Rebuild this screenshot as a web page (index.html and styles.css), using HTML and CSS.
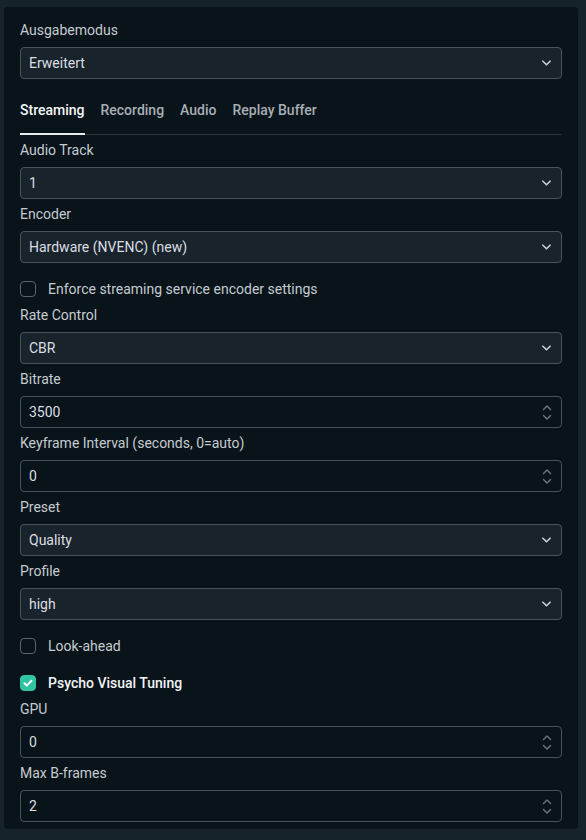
FILE: index.html
```html
<!DOCTYPE html>
<html>
<head>
<meta charset="utf-8">
<link rel="stylesheet" href="styles.css">
</head>
<body>
<div class="panel">
  <div class="group">
    <div class="label">Ausgabemodus</div>
    <div class="select"><span>Erweitert</span><svg class="chev" viewBox="0 0 10 6"><path d="M1 1l4 4 4-4"/></svg></div>
  </div>
  <div class="tabs">
    <div class="tab active">Streaming</div>
    <div class="tab">Recording</div>
    <div class="tab">Audio</div>
    <div class="tab">Replay Buffer</div>
  </div>
  <div class="group">
    <div class="label">Audio Track</div>
    <div class="select"><span>1</span><svg class="chev" viewBox="0 0 10 6"><path d="M1 1l4 4 4-4"/></svg></div>
  </div>
  <div class="group">
    <div class="label">Encoder</div>
    <div class="select"><span>Hardware (NVENC) (new)</span><svg class="chev" viewBox="0 0 10 6"><path d="M1 1l4 4 4-4"/></svg></div>
  </div>
  <div class="check"><span class="box"></span><span class="ctext">Enforce streaming service encoder settings</span></div>
  <div class="group">
    <div class="label">Rate Control</div>
    <div class="select"><span>CBR</span><svg class="chev" viewBox="0 0 10 6"><path d="M1 1l4 4 4-4"/></svg></div>
  </div>
  <div class="group">
    <div class="label">Bitrate</div>
    <div class="number"><span>3500</span><svg class="spin" viewBox="0 0 10 16"><path d="M1.5 5l3.5-3.5 3.5 3.5M1.5 11l3.5 3.5 3.5-3.5"/></svg></div>
  </div>
  <div class="group">
    <div class="label">Keyframe Interval (seconds, 0=auto)</div>
    <div class="number"><span>0</span><svg class="spin" viewBox="0 0 10 16"><path d="M1.5 5l3.5-3.5 3.5 3.5M1.5 11l3.5 3.5 3.5-3.5"/></svg></div>
  </div>
  <div class="group">
    <div class="label">Preset</div>
    <div class="select"><span>Quality</span><svg class="chev" viewBox="0 0 10 6"><path d="M1 1l4 4 4-4"/></svg></div>
  </div>
  <div class="group">
    <div class="label">Profile</div>
    <div class="select"><span>high</span><svg class="chev" viewBox="0 0 10 6"><path d="M1 1l4 4 4-4"/></svg></div>
  </div>
  <div class="check"><span class="box"></span><span class="ctext">Look-ahead</span></div>
  <div class="check"><span class="box on"><svg viewBox="0 0 16 16"><path d="M4 8.3l2.7 2.7 5.3-5.6"/></svg></span><span class="ctext bright">Psycho Visual Tuning</span></div>
  <div class="group">
    <div class="label">GPU</div>
    <div class="number"><span>0</span><svg class="spin" viewBox="0 0 10 16"><path d="M1.5 5l3.5-3.5 3.5 3.5M1.5 11l3.5 3.5 3.5-3.5"/></svg></div>
  </div>
  <div class="group last">
    <div class="label">Max B-frames</div>
    <div class="number"><span>2</span><svg class="spin" viewBox="0 0 10 16"><path d="M1.5 5l3.5-3.5 3.5 3.5M1.5 11l3.5 3.5 3.5-3.5"/></svg></div>
  </div>
</div>
</body>
</html>
```
FILE: styles.css
```css
html, body {
  margin: 0;
  padding: 0;
  background: #17232b;
  height: 840px;
  overflow: hidden;
}
body {
  padding: 7px 8px 0 4px;
  box-sizing: border-box;
  font-family: Roboto, "Liberation Sans", sans-serif;
  font-size: 14px;
}
.panel {
  background: #09131a;
  border-radius: 4px;
  padding: 13px 16px 2px 16px;
  display: flex;
  flex-direction: column;
}
.group {
  display: flex;
  flex-direction: column;
  margin-bottom: 5px;
}
.label {
  height: 20px;
  line-height: 20px;
  color: #c5cbd0;
  margin-bottom: 7px;
}
.select, .number {
  height: 32px;
  box-sizing: border-box;
  border: 1px solid #48535c;
  border-radius: 4px;
  display: flex;
  align-items: center;
  justify-content: space-between;
  padding: 0 10px 0 8px;
  color: #d9dee2;
}
.select {
  background: #19232b;
}
.number {
  background: #09131a;
}
.chev {
  width: 9px;
  height: 6px;
  fill: none;
  stroke: #c9ced2;
  stroke-width: 1.8;
  stroke-linecap: round;
  stroke-linejoin: round;
}
.spin {
  width: 10px;
  height: 17px;
  fill: none;
  stroke: #6e7880;
  stroke-width: 1.4;
  stroke-linecap: round;
  stroke-linejoin: round;
  margin-right: -1px;
}
.tabs {
  display: flex;
  gap: 16px;
  margin-top: 11px;
  margin-bottom: 5px;
  border-bottom: 1px solid #2a343c;
  padding-top: 5px;
}
.tab {
  line-height: 20px;
  padding-bottom: 13px;
  margin-bottom: -1px;
  color: #a7afb5;
  font-weight: 500;
  border-bottom: 2px solid transparent;
}
.tab.active {
  color: #f4f6f7;
  border-bottom-color: #e8ecee;
}
.check {
  display: flex;
  align-items: center;
  gap: 12px;
  height: 20px;
  margin-top: 11px;
  margin-bottom: 6px;
}
.box {
  width: 16px;
  height: 16px;
  box-sizing: border-box;
  border: 1px solid #59636b;
  border-radius: 4px;
  display: flex;
  align-items: center;
  justify-content: center;
}
.box.on {
  background: #31c4a3;
  border-color: #31c4a3;
}
.box svg {
  width: 16px;
  height: 16px;
  fill: none;
  stroke: #ffffff;
  stroke-width: 2.2;
  stroke-linecap: round;
  stroke-linejoin: round;
}
.ctext {
  color: #c5cbd0;
}
.ctext.bright {
  color: #f2f4f5;
  font-weight: 500;
}
```
